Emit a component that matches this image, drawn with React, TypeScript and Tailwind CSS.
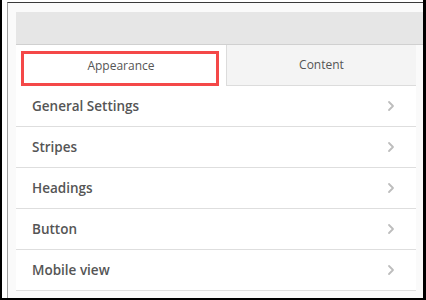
const rows = ['General Settings', 'Stripes', 'Headings', 'Button', 'Mobile view'];

function Chevron() {
  return (
    <svg width="8" height="12" viewBox="0 0 8 12" fill="none">
      <path d="M2 2l4 4-4 4" stroke="#bdbdbd" strokeWidth="1.8" strokeLinecap="round" strokeLinejoin="round" />
    </svg>
  );
}

export default function App() {
  return (
    <div
      className="flex h-[300px] w-[426px] overflow-hidden border-b-2 border-l-2 border-r-[3px] border-black bg-white pl-[5px] pt-[2px]"
      style={{ fontFamily: '"Open Sans", "Noto Sans", sans-serif' }}
    >
      <div className="flex flex-1 flex-col border-l border-t border-l-[#a0a0a0] border-t-[#3a3a3a] bg-[#fafafa] pl-2 pt-[9px]">
        <div className="h-[33px] shrink-0 border-b border-[#d0d0d0] bg-[#e6e6e6]" />
        <div className="mr-[7px] flex h-[41px] shrink-0">
          <div className="relative flex w-[210px] items-center justify-center bg-white text-[12px] text-[#555]">
            Appearance
            <div className="absolute left-[5px] top-[6px] h-[35px] w-[198px] border-[3px] border-[#f44848]" />
          </div>
          <div className="flex flex-1 items-center justify-center border-b border-l border-[#dcdcdc] bg-[#f4f4f4] text-[12px] text-[#555]">
            Content
          </div>
        </div>
        <div className="mr-[7px] bg-white">
          {rows.map((label) => (
            <div
              key={label}
              className="flex h-[41px] items-center justify-between border-b border-[#dedede] pl-4 pr-[21px] text-[13.5px] font-semibold text-[#555]"
            >
              <span>{label}</span>
              <Chevron />
            </div>
          ))}
        </div>
      </div>
    </div>
  );
}
